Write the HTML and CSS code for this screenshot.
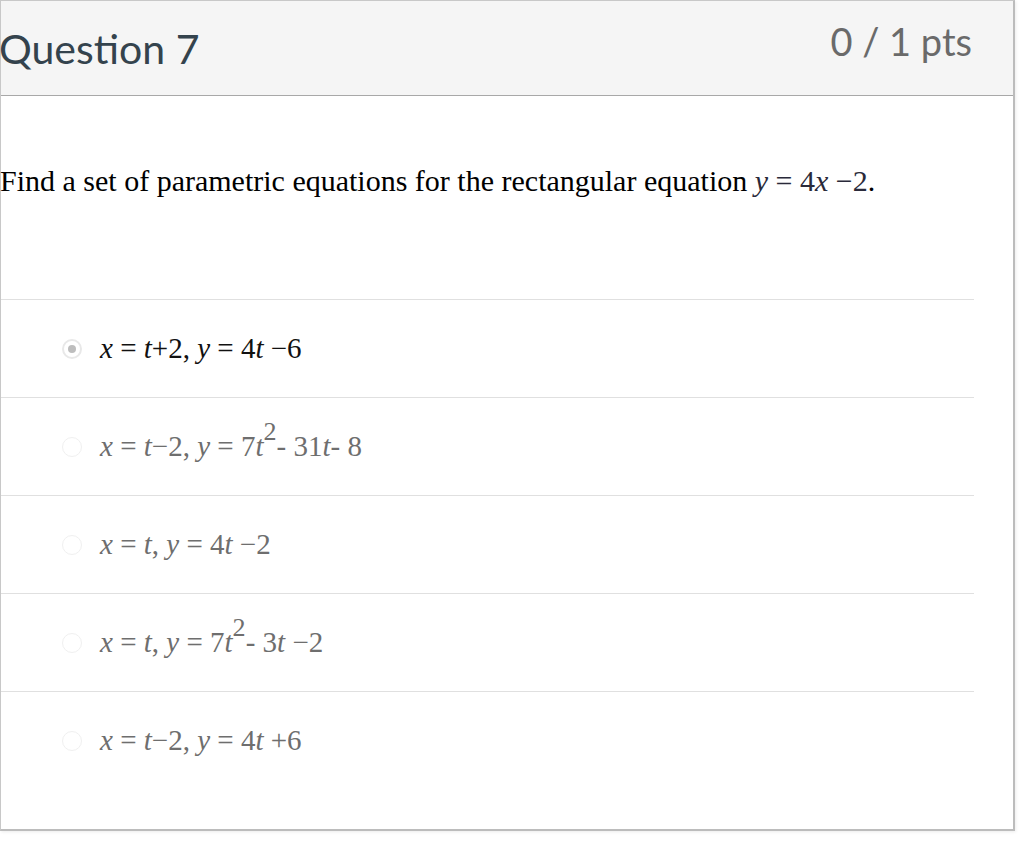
FILE: index.html
```html
<!DOCTYPE html>
<html>
<head>
<meta charset="utf-8">
<link rel="stylesheet" href="styles.css">
</head>
<body>
<div class="card">
  <div class="header">
    <div class="title">Question 7</div>
    <div class="pts">0 / 1 pts</div>
  </div>
  <div class="body">
    <p class="question">Find a set of parametric equations for the rectangular equation <span class="m"><i>y</i> = 4<i>x</i> −2</span>.</p>
    <div class="answers">
      <div class="row selected">
        <span class="radio"><span class="dot"></span></span>
        <span class="m"><i>x</i> = <i>t</i>+2, <i>y</i> = 4<i>t</i> −6</span>
      </div>
      <div class="row">
        <span class="radio"></span>
        <span class="m"><i>x</i> = <i>t</i>−2, <i>y</i> = 7<i>t</i><sup>2</sup>- 31<i>t</i>- 8</span>
      </div>
      <div class="row">
        <span class="radio"></span>
        <span class="m"><i>x</i> = <i>t</i>, <i>y</i> = 4<i>t</i> −2</span>
      </div>
      <div class="row">
        <span class="radio"></span>
        <span class="m"><i>x</i> = <i>t</i>, <i>y</i> = 7<i>t</i><sup>2</sup>- 3<i>t</i> −2</span>
      </div>
      <div class="row">
        <span class="radio"></span>
        <span class="m"><i>x</i> = <i>t</i>−2, <i>y</i> = 4<i>t</i> +6</span>
      </div>
    </div>
  </div>
</div>
</body>
</html>
```
FILE: styles.css
```css
html, body {
  margin: 0;
  padding: 0;
  background: #fff;
}
body {
  width: 1022px;
  height: 842px;
  overflow: hidden;
}
.card {
  width: 1012px;
  height: 828px;
  border: 1px solid #c8c8c8;
  border-right: 2px solid #bcbcbc;
  border-bottom: 2px solid #bcbcbc;
  box-sizing: content-box;
  box-shadow: 1px 1px 3px rgba(0,0,0,0.08);
}
.header {
  height: 94px;
  background: #f5f5f5;
  border-bottom: 1px solid #a8a8a8;
  display: flex;
  justify-content: space-between;
  align-items: flex-start;
  font-family: Lato, "Open Sans", sans-serif;
  font-weight: 400;
}
.title {
  font-size: 41px;
  color: #34434d;
  margin-top: 21px;
  margin-left: -2px;
  line-height: 54px;
}
.pts {
  font-size: 38px;
  color: #6a6a6a;
  margin-top: 15px;
  margin-right: 41px;
  line-height: 50px;
}
.body {
  font-family: "Liberation Serif", "Times New Roman", serif;
}
.question {
  margin: 0;
  padding-top: 65px;
  font-size: 30px;
  line-height: 40px;
  color: #000;
  height: 138px;
  margin-left: -1px;
}
.m {
  font-family: "Liberation Serif", "Times New Roman", serif;
  color: #333;
}
.question .m { color: #2a2a3a; }
.answers {
  width: 973px;
}
.row {
  height: 97px;
  border-top: 1px solid #e0e0e0;
  display: flex;
  align-items: center;
  padding-left: 61px;
  font-size: 29px;
  color: #777;
  box-sizing: content-box;
}
.row .m { color: #6e6e6e; }
.row.selected .m { color: #111; }
.radio {
  width: 20px;
  height: 20px;
  border-radius: 50%;
  border: 1px solid #f0f0f0;
  background: #fff;
  box-sizing: border-box;
  margin-right: 18px;
  display: flex;
  align-items: center;
  justify-content: center;
  flex: none;
}
.selected .radio {
  border: 2px solid #e8e8e8;
}
.dot {
  width: 8px;
  height: 8px;
  border-radius: 50%;
  background: #bdbdbd;
}
sup {
  font-size: 0.9em;
  line-height: 0;
  vertical-align: 0.6em;
}
```
